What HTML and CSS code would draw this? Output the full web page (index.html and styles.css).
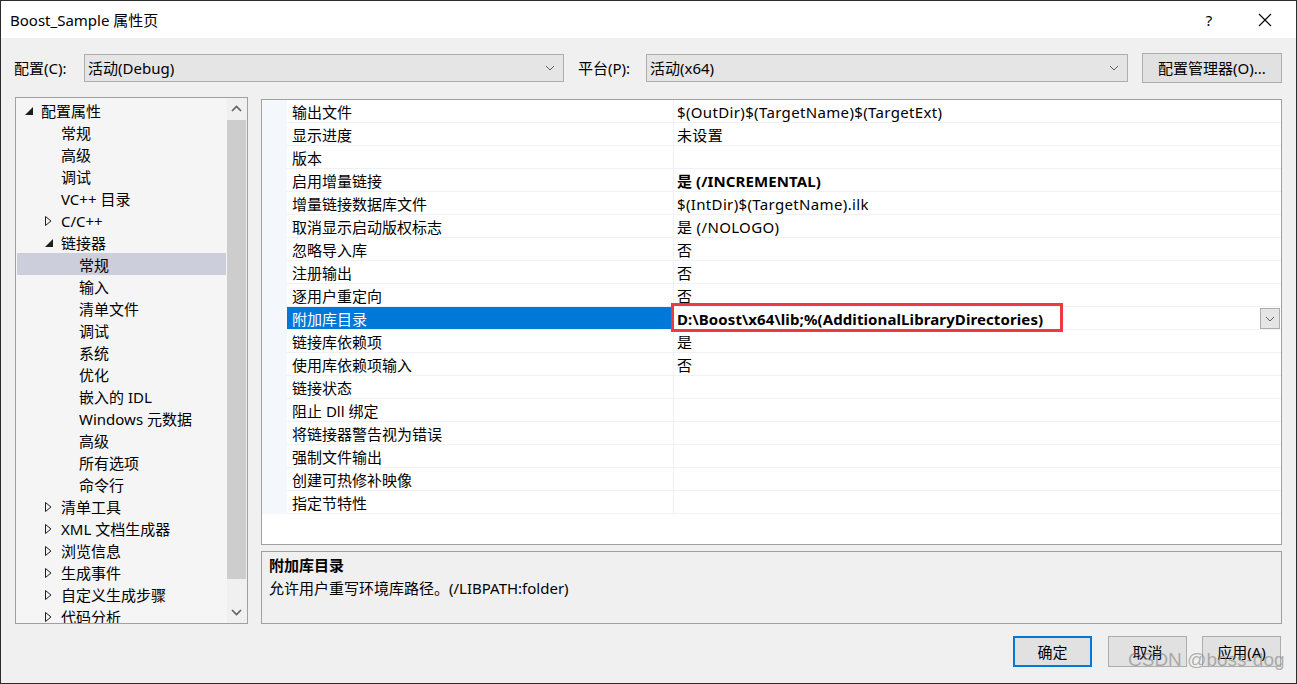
FILE: index.html
```html
<!DOCTYPE html>
<html lang="zh-CN">
<head>
<meta charset="utf-8">
<title>Boost_Sample 属性页</title>
<link rel="stylesheet" href="styles.css">
</head>
<body>
<div class="window">
  <div class="titlebar">
    <span class="title">Boost_Sample 属性页</span>
    <div class="title-actions">
      <span class="help">?</span>
      <svg class="close" width="14" height="14" viewBox="0 0 14 14"><path d="M1 1 L13 13 M13 1 L1 13" stroke="#000" stroke-width="1.1" fill="none"/></svg>
    </div>
  </div>
  <div class="content">
    <div class="config-row">
      <span class="lbl lbl-config">配置(C):</span>
      <div class="combo combo-config"><span>活动(Debug)</span><svg class="chev" width="10" height="6" viewBox="0 0 10 6"><path d="M1 1 L5 5 L9 1" stroke="#606060" stroke-width="1" fill="none"/></svg></div>
      <span class="lbl lbl-platform">平台(P):</span>
      <div class="combo combo-platform"><span>活动(x64)</span><svg class="chev" width="10" height="6" viewBox="0 0 10 6"><path d="M1 1 L5 5 L9 1" stroke="#606060" stroke-width="1" fill="none"/></svg></div>
      <button class="btn btn-manager">配置管理器(O)...</button>
    </div>
    <div class="main">
      <div class="tree">
        <div class="tree-items">
          <div class="trow l0"><span class="twisty"><svg width="8" height="8" viewBox="0 0 8 8"><polygon points="8,0 8,8 0,8" fill="#1e1e1e"/></svg></span>配置属性</div>
          <div class="trow l1"><span class="twisty"></span>常规</div>
          <div class="trow l1"><span class="twisty"></span>高级</div>
          <div class="trow l1"><span class="twisty"></span>调试</div>
          <div class="trow l1"><span class="twisty"></span>VC++ 目录</div>
          <div class="trow l1"><span class="twisty"><svg width="7" height="10" viewBox="0 0 7 10"><polygon points="0.5,0.5 6,5 0.5,9.5" fill="none" stroke="#1e1e1e" stroke-width="1"/></svg></span>C/C++</div>
          <div class="trow l1"><span class="twisty"><svg width="8" height="8" viewBox="0 0 8 8"><polygon points="8,0 8,8 0,8" fill="#1e1e1e"/></svg></span>链接器</div>
          <div class="trow l2 selected"><span class="twisty"></span>常规</div>
          <div class="trow l2"><span class="twisty"></span>输入</div>
          <div class="trow l2"><span class="twisty"></span>清单文件</div>
          <div class="trow l2"><span class="twisty"></span>调试</div>
          <div class="trow l2"><span class="twisty"></span>系统</div>
          <div class="trow l2"><span class="twisty"></span>优化</div>
          <div class="trow l2"><span class="twisty"></span>嵌入的 IDL</div>
          <div class="trow l2"><span class="twisty"></span>Windows 元数据</div>
          <div class="trow l2"><span class="twisty"></span>高级</div>
          <div class="trow l2"><span class="twisty"></span>所有选项</div>
          <div class="trow l2"><span class="twisty"></span>命令行</div>
          <div class="trow l1"><span class="twisty"><svg width="7" height="10" viewBox="0 0 7 10"><polygon points="0.5,0.5 6,5 0.5,9.5" fill="none" stroke="#1e1e1e" stroke-width="1"/></svg></span>清单工具</div>
          <div class="trow l1"><span class="twisty"><svg width="7" height="10" viewBox="0 0 7 10"><polygon points="0.5,0.5 6,5 0.5,9.5" fill="none" stroke="#1e1e1e" stroke-width="1"/></svg></span>XML 文档生成器</div>
          <div class="trow l1"><span class="twisty"><svg width="7" height="10" viewBox="0 0 7 10"><polygon points="0.5,0.5 6,5 0.5,9.5" fill="none" stroke="#1e1e1e" stroke-width="1"/></svg></span>浏览信息</div>
          <div class="trow l1"><span class="twisty"><svg width="7" height="10" viewBox="0 0 7 10"><polygon points="0.5,0.5 6,5 0.5,9.5" fill="none" stroke="#1e1e1e" stroke-width="1"/></svg></span>生成事件</div>
          <div class="trow l1"><span class="twisty"><svg width="7" height="10" viewBox="0 0 7 10"><polygon points="0.5,0.5 6,5 0.5,9.5" fill="none" stroke="#1e1e1e" stroke-width="1"/></svg></span>自定义生成步骤</div>
          <div class="trow l1"><span class="twisty"><svg width="7" height="10" viewBox="0 0 7 10"><polygon points="0.5,0.5 6,5 0.5,9.5" fill="none" stroke="#1e1e1e" stroke-width="1"/></svg></span>代码分析</div>
        </div>
        <div class="vscroll">
          <div class="sb-btn"><svg width="11" height="7" viewBox="0 0 11 7"><path d="M1 6 L5.5 1.5 L10 6" stroke="#606060" stroke-width="1.6" fill="none"/></svg></div>
          <div class="sb-track"><div class="sb-thumb"></div></div>
          <div class="sb-btn"><svg width="11" height="7" viewBox="0 0 11 7"><path d="M1 1 L5.5 5.5 L10 1" stroke="#606060" stroke-width="1.6" fill="none"/></svg></div>
        </div>
      </div>
      <div class="right">
        <div class="grid">
          <div class="prow"><span class="margin"></span><span class="pname">输出文件</span><span class="pval">$(OutDir)$(TargetName)$(TargetExt)</span></div>
          <div class="prow"><span class="margin"></span><span class="pname">显示进度</span><span class="pval">未设置</span></div>
          <div class="prow"><span class="margin"></span><span class="pname">版本</span><span class="pval"></span></div>
          <div class="prow"><span class="margin"></span><span class="pname">启用增量链接</span><span class="pval bold">是 (/INCREMENTAL)</span></div>
          <div class="prow"><span class="margin"></span><span class="pname">增量链接数据库文件</span><span class="pval">$(IntDir)$(TargetName).ilk</span></div>
          <div class="prow"><span class="margin"></span><span class="pname">取消显示启动版权标志</span><span class="pval">是 (/NOLOGO)</span></div>
          <div class="prow"><span class="margin"></span><span class="pname">忽略导入库</span><span class="pval">否</span></div>
          <div class="prow"><span class="margin"></span><span class="pname">注册输出</span><span class="pval">否</span></div>
          <div class="prow"><span class="margin"></span><span class="pname">逐用户重定向</span><span class="pval">否</span></div>
          <div class="prow active"><span class="margin"></span><span class="pname">附加库目录</span><span class="pval bold">D:\Boost\x64\lib;%(AdditionalLibraryDirectories)<span class="highlight-box"></span><span class="cell-drop"><svg width="10" height="6" viewBox="0 0 10 6"><path d="M1 1 L5 5 L9 1" stroke="#606060" stroke-width="1" fill="none"/></svg></span></span></div>
          <div class="prow"><span class="margin"></span><span class="pname">链接库依赖项</span><span class="pval">是</span></div>
          <div class="prow"><span class="margin"></span><span class="pname">使用库依赖项输入</span><span class="pval">否</span></div>
          <div class="prow"><span class="margin"></span><span class="pname">链接状态</span><span class="pval"></span></div>
          <div class="prow"><span class="margin"></span><span class="pname">阻止 Dll 绑定</span><span class="pval"></span></div>
          <div class="prow"><span class="margin"></span><span class="pname">将链接器警告视为错误</span><span class="pval"></span></div>
          <div class="prow"><span class="margin"></span><span class="pname">强制文件输出</span><span class="pval"></span></div>
          <div class="prow"><span class="margin"></span><span class="pname">创建可热修补映像</span><span class="pval"></span></div>
          <div class="prow"><span class="margin"></span><span class="pname">指定节特性</span><span class="pval"></span></div>
        </div>
        <div class="desc">
          <div class="desc-title">附加库目录</div>
          <div class="desc-text">允许用户重写环境库路径。(/LIBPATH:folder)</div>
        </div>
      </div>
    </div>
    <div class="footer">
      <button class="btn btn-dlg btn-default">确定</button>
      <button class="btn btn-dlg">取消</button>
      <button class="btn btn-dlg">应用(A)</button>
    </div>
  </div>
  <div class="watermark">CSDN @boss-dog</div>
</div>
</body>
</html>
```

FILE: styles.css
```css
* { box-sizing: border-box; }
html, body { margin: 0; padding: 0; }
body {
  font-family: "Noto Sans", "Noto Sans CJK SC", sans-serif;
  font-size: 15px;
  color: #000;
  background: #f0f0f0;
}
.window {
  position: relative;
  width: 1297px;
  height: 684px;
  border: 1px solid #2b2b2b;
  background: #f0f0f0;
  display: flex;
  flex-direction: column;
  overflow: hidden;
}
.titlebar {
  height: 37px;
  flex: none;
  background: #fff;
  display: flex;
  align-items: center;
  justify-content: space-between;
  padding-left: 9px;
}
.title { font-size: 15px; line-height: 20px; }
.title-actions { display: flex; align-items: center; height: 37px; }
.help { width: 20px; text-align: center; font-size: 15px; margin-right: 39px; }
.close { margin: 0 24px 0 0; }
.content { flex: 1; display: flex; flex-direction: column; }
.config-row {
  display: flex;
  align-items: center;
  height: 29px;
  margin-top: 15px;
  padding-left: 13px;
}
.lbl { line-height: 20px; white-space: nowrap; }
.lbl-config { width: 70px; }
.lbl-platform { width: 68px; margin-left: 14px; }
.combo {
  height: 28px;
  background: #e5e5e5;
  border: 1px solid #adadad;
  display: flex;
  align-items: center;
  justify-content: space-between;
  padding: 0 8px 0 3px;
  line-height: 20px;
}
.combo-config { width: 480px; }
.combo-platform { width: 482px; }
.btn {
  font-family: inherit;
  font-size: 15px;
  color: #000;
  background: #e1e1e1;
  border: 1px solid #adadad;
  padding: 0;
}
.btn-manager { width: 140px; height: 30px; margin-left: 14px; }
.main {
  display: flex;
  margin-top: 15px;
  padding-left: 14px;
  height: 527px;
}
.tree {
  width: 233px;
  height: 527px;
  border: 1px solid #a0a0a0;
  background: #f5f5f5;
  display: flex;
}
.tree-items {
  flex: 1;
  overflow: hidden;
  padding-top: 1px;
}
.trow {
  height: 22px;
  display: flex;
  align-items: center;
  white-space: nowrap;
  margin: 0 1px;
  line-height: 20px;
  padding-top: 1px;
}
.twisty { width: 16px; flex: none; display: flex; align-items: center; }
.l0 { padding-left: 8px; }
.l1 { padding-left: 28px; }
.l2 { padding-left: 46px; }
.trow.selected { background: #cccedb; }
.vscroll {
  width: 20px;
  flex: none;
  display: flex;
  flex-direction: column;
  background: #f0f0f0;
  padding-right: 1px;
}
.sb-btn { height: 21px; display: flex; align-items: center; justify-content: center; flex: none; }
.sb-track { flex: 1; display: flex; flex-direction: column; }
.sb-thumb { height: 459px; background: #cdcdcd; margin-top: 1px; }
.right {
  margin-left: 13px;
  margin-top: 2px;
  width: 1021px;
  display: flex;
  flex-direction: column;
}
.grid {
  height: 447px;
  background: #fff;
  border: 1px solid #a0a0a0;
}
.prow {
  display: grid;
  grid-template-columns: 25px 387px 1fr;
  height: 23px;
}
.margin { background: #f4f7fc; }
.pname, .pval {
  display: flex;
  align-items: center;
  border-bottom: 1px solid #eef1f8;
  white-space: nowrap;
  line-height: 20px;
  padding-top: 2px;
}
.pname { padding-left: 5px; border-right: 1px solid #eef1f8; }
.pval { padding-left: 3px; position: relative; letter-spacing: 0.35px; }
.pval.bold { font-weight: bold; letter-spacing: 0.1px; }
.prow.active .pname { background: #0078d7; color: #fff; }
.highlight-box {
  position: absolute;
  left: -3px;
  top: -4px;
  width: 392px;
  height: 29px;
  border: 3px solid #ee3940;
  pointer-events: none;
}
.cell-drop {
  position: absolute;
  right: 1px;
  top: 1px;
  width: 20px;
  height: 21px;
  background: #e5e5e5;
  border: 1px solid #adadad;
  display: flex;
  align-items: center;
  justify-content: center;
}
.desc {
  margin-top: 6px;
  height: 73px;
  border: 1px solid #a0a0a0;
  background: #f0f0f0;
  padding: 2px 7px;
}
.desc-title { font-weight: bold; line-height: 23px; }
.desc-text { line-height: 23px; }
.footer {
  display: flex;
  justify-content: flex-end;
  margin-top: 12px;
  padding-right: 15px;
  gap: 15px;
}
.btn-dlg { width: 79px; height: 31px; }
.btn-default { border: 2px solid #0078d7; margin-right: 1px; }
.watermark {
  position: absolute;
  left: 1127px;
  top: 648px;
  font-family: "Liberation Sans", sans-serif;
  font-size: 19px;
  color: rgba(120, 120, 120, 0.55);
  white-space: nowrap;
  pointer-events: none;
}
```
